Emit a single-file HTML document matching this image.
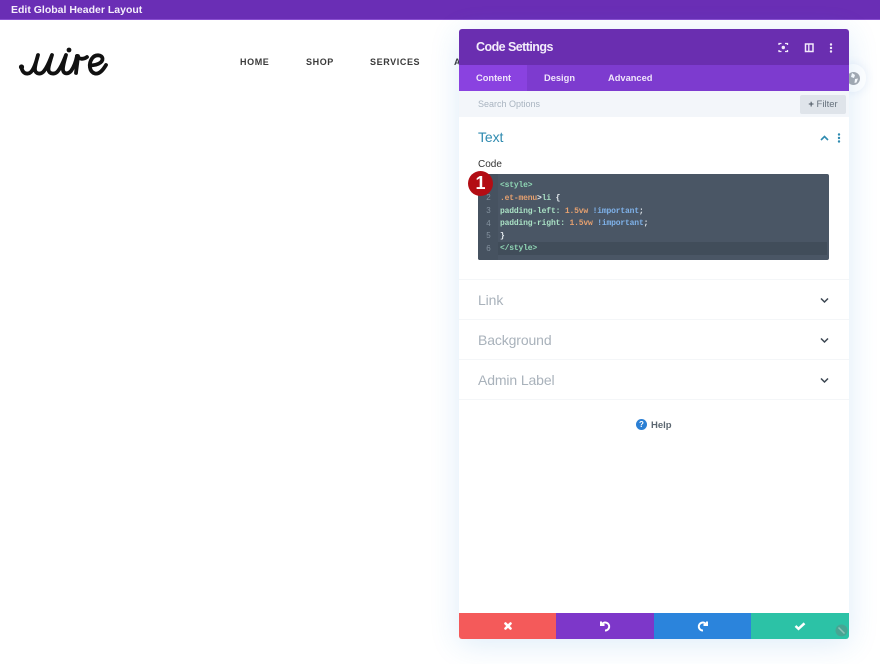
<!DOCTYPE html>
<html><head><meta charset="utf-8"><style>
*{box-sizing:border-box}
html,body{margin:0;padding:0;background:#fff}
body{width:880px;height:664px;position:relative;overflow:hidden;font-family:"Liberation Sans",sans-serif}
.a{position:absolute;white-space:nowrap}
.nav{top:57px;font-size:9px;font-weight:bold;letter-spacing:.6px;color:#3a3a3a;line-height:11px}
.h{left:478px;font-size:14px;color:#a9b2bb;line-height:18px;letter-spacing:-.12px}
.sep{left:459px;width:390px;height:1px;background:#f4f6f8}
.tab{top:65px;height:26px;line-height:27px;font-size:9.300px;font-weight:bold;color:#f0e6fb}
.ln{left:478px;width:21px;text-align:center;font-size:8px;color:#8593a0;line-height:12px}
.c{left:500px;font:bold 8px/12px "Liberation Mono",monospace;letter-spacing:-.17px;color:#a9e0c4}
.o{color:#e5a06f}.b{color:#7fb2ea}.w{color:#e8eef2}
.btn{top:613px;height:26px;display:flex;align-items:center;justify-content:center}
</style></head><body>
<div class="a" style="left:0;top:0;width:880px;height:20px;background:#6a2eb5;border-bottom:1px solid #8a4fd0"></div>
<div class="a" style="left:11px;top:3px;font-size:10.500px;font-weight:bold;color:#f4eefb;line-height:14px">Edit Global Header Layout</div>

<svg class="a" style="left:15px;top:42px" width="100" height="38" viewBox="15 42 100 38" role="img" aria-label="wire logo">
<g fill="none" stroke="#111" stroke-width="3.800" stroke-linecap="round" stroke-linejoin="round">
<path d="M21.500 67C22 72 25 74 28 73.500C33 73 36 63 38 55C36 62 34.500 67 35 70C35.500 74 41 75 44 71C47.500 67 50 60 52 55C50 62 48 67 48.500 70C49 74 55 75 58 71C61.500 67 64 60 66 55C64 62 62.500 67 63 70C63.500 74 68 74.500 71 71C74 67 76 61 77 56"/>
<path d="M78 56C77.500 62 76.500 68 76 73"/>
<path d="M77 56C79 59 83 60 87 57"/>
<path d="M90.500 65C95 66 103 63 102.500 58.500C102 54.500 95 54 92 58.500C88.500 63.500 89 72 95 73.500C99.500 74.500 103 70 106 65"/>
</g><circle cx="21.500" cy="67" r="2.600" fill="#111"/><circle cx="69" cy="50" r="2.400" fill="#111"/></svg>

<div class="a nav" style="left:240px">HOME</div>
<div class="a nav" style="left:306px">SHOP</div>
<div class="a nav" style="left:370px">SERVICES</div>
<div class="a nav" style="left:454px">A</div>

<div class="a" style="left:840px;top:64px;width:26px;height:28px;border-radius:14px;background:#fff;box-shadow:0 0 10px rgba(60,110,200,.12)"></div>
<div class="a" style="left:847px;top:72px;width:13px;height:13px;border-radius:50%;background:#a7aab0"><svg width="13" height="13" viewBox="0 0 13 13"><path d="M5 1l3 2-1 3-3-1zM8 7l3-.5-1.500 4-2 .5z" fill="#fff"/></svg></div>

<div class="a" style="left:459px;top:29px;width:390px;height:610px;background:#fff;border-radius:3px;box-shadow:0 5px 30px rgba(43,135,218,.16)"></div>
<div class="a" style="left:459px;top:29px;width:390px;height:36px;background:#6a2eb0;border-radius:3px 3px 0 0"></div>
<div class="a" style="left:476px;top:39px;font-size:12.500px;letter-spacing:-.55px;font-weight:bold;color:#f3ecfb;line-height:17px">Code Settings</div>
<svg class="a" style="left:777px;top:41px" width="60" height="14" viewBox="0 0 60 14" fill="none" stroke="#f2eafb">
<path d="M2 4V2.500h2.500M8 2.500h2.500V4M2 9v1.500h2.500M8 10.500h2.500V9" stroke-width="1.300"/><circle cx="6.300" cy="6.500" r="1.700" fill="#f2eafb" stroke="none"/>
<rect x="28.500" y="3" width="7.500" height="7.500" stroke-width="1.500"/><path d="M31.800 3v7.500" stroke-width="1.300"/>
<g fill="#f2eafb" stroke="none"><circle cx="54" cy="3.500" r="1.200"/><circle cx="54" cy="7" r="1.200"/><circle cx="54" cy="10.500" r="1.200"/></g></svg>

<div class="a" style="left:459px;top:65px;width:390px;height:26px;background:#7d3bcf"></div>
<div class="a" style="left:459px;top:65px;width:68px;height:26px;background:#8a42e0"></div>
<div class="a tab" style="left:476px">Content</div>
<div class="a tab" style="left:544px">Design</div>
<div class="a tab" style="left:608px">Advanced</div>

<div class="a" style="left:459px;top:91px;width:390px;height:26px;background:#f3f6fa"></div>
<div class="a" style="left:478px;top:98px;font-size:9px;line-height:13px;color:#a9b4c0">Search Options</div>
<div class="a" style="left:800px;top:95px;width:46px;height:19px;background:#dfe4ea;border-radius:2px;font-size:9.500px;line-height:19px;color:#66717c;text-align:center"><b style="color:#4a5560">+</b> Filter</div>

<div class="a" style="left:478px;top:128px;font-size:14px;line-height:18px;color:#2f8bb0;letter-spacing:-.1px">Text</div>
<svg class="a" style="left:819px;top:132px" width="24" height="12" viewBox="0 0 24 12"><path d="M2 8l3.500-3.500L9 8" fill="none" stroke="#2f8bb0" stroke-width="1.600"/><g fill="#2f8bb0"><circle cx="20" cy="2.500" r="1.200"/><circle cx="20" cy="6" r="1.200"/><circle cx="20" cy="9.500" r="1.200"/></g></svg>

<div class="a" style="left:478px;top:158px;font-size:10px;line-height:13px;color:#333">Code</div>
<div class="a" style="left:478px;top:174px;width:351px;height:86px;background:#4a5665;border-radius:2px"></div>
<div class="a" style="left:478px;top:174px;width:20px;height:86px;background:#465260;border-radius:2px 0 0 2px"></div>
<div class="a" style="left:498px;top:242px;width:329px;height:13px;background:#414d5a"></div>
<div class="a ln" style="top:192px">2</div><div class="a ln" style="top:205px">3</div><div class="a ln" style="top:218px">4</div><div class="a ln" style="top:230px">5</div><div class="a ln" style="top:243px">6</div>
<div class="a c" style="top:180px;color:#8fd6b4">&lt;style&gt;</div>
<div class="a c" style="top:193px"><span class="o">.et-menu</span><span class="w">&gt;</span>li <span class="w">{</span></div>
<div class="a c" style="top:206px">padding-left: <span class="o">1.5vw</span> <span class="b">!important</span><span class="w">;</span></div>
<div class="a c" style="top:218px">padding-right: <span class="o">1.5vw</span> <span class="b">!important</span><span class="w">;</span></div>
<div class="a c" style="top:231px;color:#e8eef2">}</div>
<div class="a c" style="top:243px;color:#8fd6b4">&lt;/style&gt;</div>
<div class="a" style="left:468px;top:171px;width:25px;height:25px;border-radius:50%;background:#b30d14;color:#fff;font-size:18px;font-weight:bold;line-height:25px;text-align:center">1</div>

<div class="a sep" style="top:279px"></div><div class="a sep" style="top:319px"></div><div class="a sep" style="top:359px"></div><div class="a sep" style="top:399px"></div>
<div class="a h" style="top:291px">Link</div>
<div class="a h" style="top:331px">Background</div>
<div class="a h" style="top:371px">Admin Label</div>
<svg class="a" style="left:819px;top:296px" width="11" height="90" viewBox="0 0 11 90" fill="none" stroke="#3a4550" stroke-width="1.500"><path d="M2 2.500l3.500 3.500L9 2.500M2 42.500l3.500 3.500L9 42.500M2 82.500l3.500 3.500L9 82.500"/></svg>

<div class="a" style="left:636px;top:419px;width:11px;height:11px;border-radius:50%;background:#2b7fd4;color:#fff;font-size:8px;font-weight:bold;line-height:11px;text-align:center">?</div>
<div class="a" style="left:651px;top:419px;font-size:9.500px;font-weight:bold;line-height:13px;color:#5b6670">Help</div>

<div class="a btn" style="left:459px;width:97px;background:#f45a5a;border-radius:0 0 0 3px"><svg width="12" height="12" viewBox="0 0 12 12"><path d="M3.500 3.500l5 5M8.500 3.500l-5 5" stroke="#fff" stroke-width="2.600" stroke-linecap="round"/></svg></div>
<div class="a btn" style="left:556px;width:98px;background:#7d37c9"><svg width="12" height="12" viewBox="0 0 12 12" fill="none" stroke="#fff" stroke-width="2"><path d="M2 1.500v3.500h3.500M2.500 5A4 4 0 1 1 6 10.500"/></svg></div>
<div class="a btn" style="left:654px;width:97px;background:#2b84dc"><svg width="12" height="12" viewBox="0 0 12 12" fill="none" stroke="#fff" stroke-width="2"><path d="M10 1.500v3.500H6.500M9.500 5A4 4 0 1 0 6 10.500"/></svg></div>
<div class="a btn" style="left:751px;width:98px;background:#2cc2a6;border-radius:0 0 3px 0"><svg width="12" height="12" viewBox="0 0 12 12" fill="none" stroke="#fff" stroke-width="2.500"><path d="M1.500 6l3 2.800 6-5.500"/></svg></div>
<svg class="a" style="left:835px;top:624px" width="13" height="13" viewBox="0 0 13 13"><circle cx="6.500" cy="6.500" r="6" fill="#4f9d8f" fill-opacity=".8"/><path d="M3.500 3.500l6 6" stroke="#8cc4b8" stroke-width="1.500"/></svg>
</body></html>
